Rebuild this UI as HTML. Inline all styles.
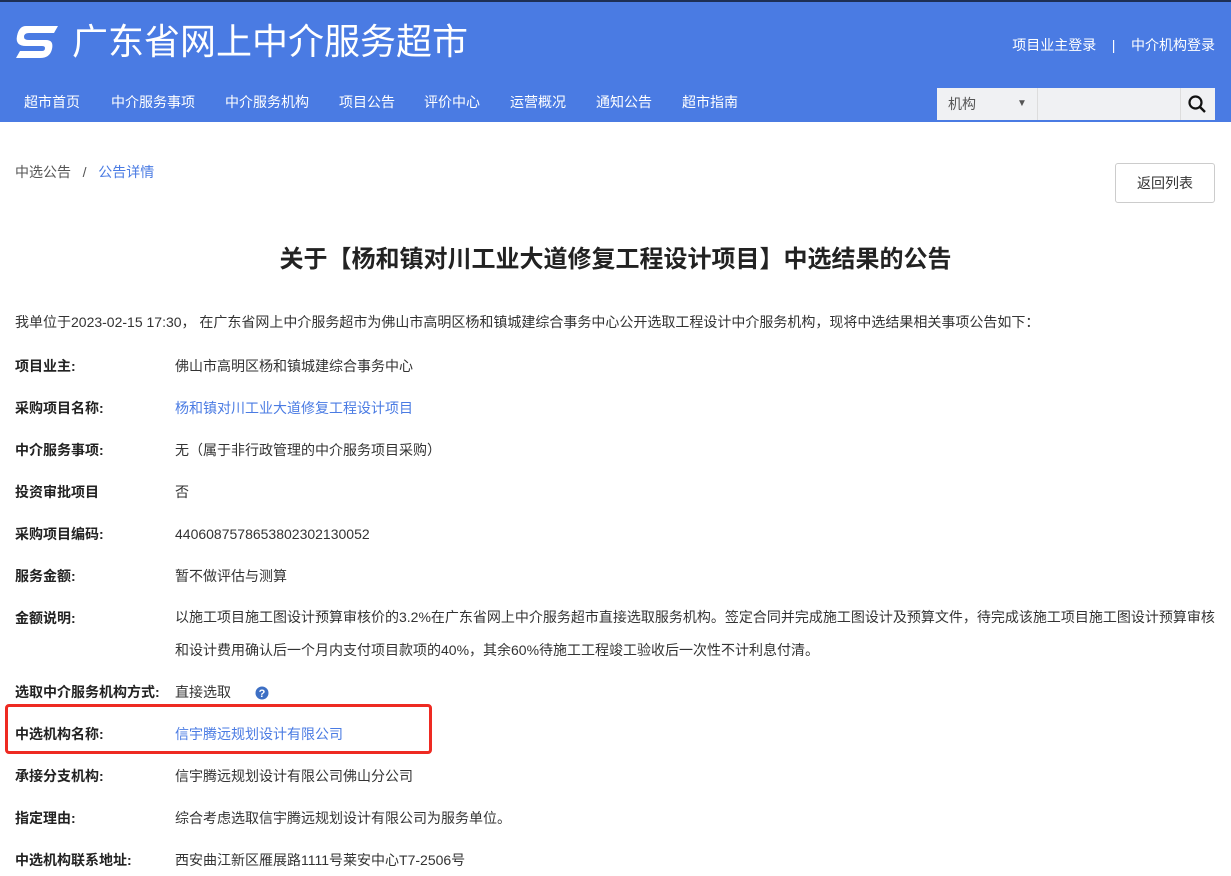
<!DOCTYPE html>
<html><head><meta charset="utf-8"><style>
*{margin:0;padding:0;box-sizing:border-box}
body{width:1231px;height:876px;overflow:hidden;background:#fff;font-family:"Liberation Sans","Noto Sans CJK SC",sans-serif;color:#333;font-size:14px;line-height:20px;position:relative}
.hd{position:absolute;left:0;top:0;width:1231px;height:122px;background:#4a7be3;border-top:2px solid #1d2f55}
.logo{position:absolute;left:14px;top:22px}
.title{position:absolute;left:72px;top:16px;color:#fff;font-size:36px;line-height:48px}
.login{position:absolute;right:16px;top:33px;color:#fff;font-size:14px}
.nav{position:absolute;left:24px;top:90px;color:#fff;font-size:14px}
.nav span{position:absolute;white-space:nowrap}
.srch{position:absolute;left:937px;top:86px;width:278px;height:32px;background:#f0f1f3}
.a{position:absolute;white-space:nowrap}
.lbl{font-weight:bold;color:#222}
.lnk{color:#4a7be3}
</style></head><body>
<div class="hd">
<svg class="logo" width="46" height="36" viewBox="0 0 46 36"><path d="M12 2H44L40 9H15Q10 9 10 13Q10 16 15 16H32Q40 16 38 25Q36 34 26 34H2L6 27H28Q31 27 31 24Q31 22 28 22H12Q1 22 3 12Q5 2 12 2Z" fill="#fff"/><path d="M14 12H34L32 14H14Z" fill="#4a7be3"/></svg>
<div class="title">广东省网上中介服务超市</div>
<div class="login">项目业主登录 &nbsp;&nbsp;&nbsp;|&nbsp;&nbsp;&nbsp; 中介机构登录</div>
<div class="nav"><span style="left:0">超市首页</span><span style="left:87px">中介服务事项</span><span style="left:201px">中介服务机构</span><span style="left:315px">项目公告</span><span style="left:400px">评价中心</span><span style="left:486px">运营概况</span><span style="left:572px">通知公告</span><span style="left:658px">超市指南</span></div>
<div class="srch"><span class="a" style="left:11px;top:6px;color:#555;font-size:14px">机构</span><span class="a" style="left:80px;top:6px;color:#555;font-size:10px">▼</span><div class="a" style="left:100px;top:0;width:1px;height:32px;background:#ddd"></div><div class="a" style="left:243px;top:0;width:1px;height:32px;background:#ddd"></div>
<svg class="a" style="left:251px;top:7px" width="18" height="18" viewBox="0 0 18 18"><circle cx="7.5" cy="7.5" r="6" fill="none" stroke="#111" stroke-width="2.2"/><path d="M12 12L17 17" stroke="#111" stroke-width="2.4"/></svg></div>
</div>
<div class="a" style="left:15px;top:162px;color:#555">中选公告 &nbsp;&nbsp;/ &nbsp;&nbsp;<span class="lnk">公告详情</span></div>
<div class="a" style="left:1115px;top:163px;width:100px;height:40px;border:1px solid #ccc;border-radius:3px;text-align:center;line-height:38px;color:#333">返回列表</div>
<div class="a" style="left:0;width:1231px;top:244px;text-align:center;font-size:24px;line-height:32px;font-weight:bold;color:#222">关于【杨和镇对川工业大道修复工程设计项目】中选结果的公告</div>
<div class="a" style="left:15px;top:312px">我单位于2023-02-15 17:30， 在广东省网上中介服务超市为佛山市高明区杨和镇城建综合事务中心公开选取工程设计中介服务机构，现将中选结果相关事项公告如下：</div>
<div class="a lbl" style="left:15px;top:356px">项目业主:</div><div class="a" style="left:175px;top:356px">佛山市高明区杨和镇城建综合事务中心</div>
<div class="a lbl" style="left:15px;top:398px">采购项目名称:</div><div class="a lnk" style="left:175px;top:398px">杨和镇对川工业大道修复工程设计项目</div>
<div class="a lbl" style="left:15px;top:440px">中介服务事项:</div><div class="a" style="left:175px;top:440px">无（属于非行政管理的中介服务项目采购）</div>
<div class="a lbl" style="left:15px;top:482px">投资审批项目</div><div class="a" style="left:175px;top:482px">否</div>
<div class="a lbl" style="left:15px;top:524px">采购项目编码:</div><div class="a" style="left:175px;top:524px">4406087578653802302130052</div>
<div class="a lbl" style="left:15px;top:566px">服务金额:</div><div class="a" style="left:175px;top:566px">暂不做评估与测算</div>
<div class="a lbl" style="left:15px;top:608px">金额说明:</div><div class="a" style="left:175px;top:601px;line-height:33px">以施工项目施工图设计预算审核价的3.2%在广东省网上中介服务超市直接选取服务机构。签定合同并完成施工图设计及预算文件，待完成该施工项目施工图设计预算审核<br>和设计费用确认后一个月内支付项目款项的40%，其余60%待施工工程竣工验收后一次性不计利息付清。</div>
<div class="a lbl" style="left:15px;top:682px">选取中介服务机构方式:</div><div class="a" style="left:175px;top:682px">直接选取</div>
<svg class="a" style="left:255px;top:686px" width="14" height="14"><circle cx="7" cy="7" r="6.5" fill="#3d6fc4"/><text x="7" y="11" font-size="11" font-weight="bold" fill="#fff" text-anchor="middle" font-family="Liberation Sans">?</text></svg>
<div class="a" style="left:5px;top:704px;width:427px;height:50px;border:3px solid #ee2a22;border-radius:4px"></div>
<div class="a lbl" style="left:15px;top:724px">中选机构名称:</div><div class="a lnk" style="left:175px;top:724px">信宇腾远规划设计有限公司</div>
<div class="a lbl" style="left:15px;top:766px">承接分支机构:</div><div class="a" style="left:175px;top:766px">信宇腾远规划设计有限公司佛山分公司</div>
<div class="a lbl" style="left:15px;top:808px">指定理由:</div><div class="a" style="left:175px;top:808px">综合考虑选取信宇腾远规划设计有限公司为服务单位。</div>
<div class="a lbl" style="left:15px;top:850px">中选机构联系地址:</div><div class="a" style="left:175px;top:850px">西安曲江新区雁展路1111号莱安中心T7-2506号</div>
</body></html>
